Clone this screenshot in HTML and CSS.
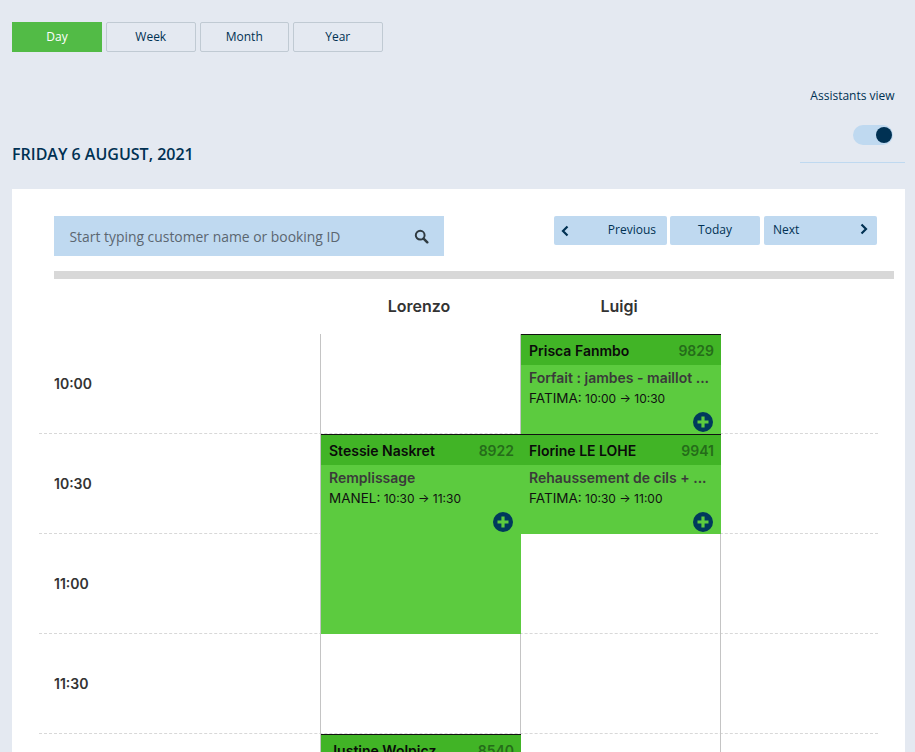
FILE: index.html
```html
<!DOCTYPE html>
<html lang="en">
<head>
<meta charset="utf-8">
<title>Calendar</title>
<link rel="stylesheet" href="styles.css">
</head>
<body>
<header class="top">
  <nav class="tabs">
    <button class="tab tab-active">Day</button>
    <button class="tab">Week</button>
    <button class="tab">Month</button>
    <button class="tab">Year</button>
  </nav>
  <div class="headline">
    <h1 class="date">FRIDAY 6 AUGUST, 2021</h1>
    <div class="assist">
      <span class="assist-label">Assistants view</span>
      <span class="toggle"><span class="knob"></span></span>
    </div>
  </div>
</header>
<main class="card">
  <div class="tools">
    <div class="search">
      <span class="search-text">Start typing customer name or booking ID</span>
      <svg class="search-icon" viewBox="0 0 16 16" width="15" height="15"><circle cx="6.6" cy="6.6" r="4.7" fill="none" stroke="#2f3a40" stroke-width="2.1"/><path d="M10.2 10.2l4 4" fill="none" stroke="#2f3a40" stroke-width="2.6" stroke-linecap="round"/></svg>
    </div>
    <div class="pager">
      <button class="page page-prev"><svg viewBox="0 0 10 12" width="10" height="12"><path d="M7.5 1.5L3 6l4.5 4.5" fill="none" stroke="#003153" stroke-width="2.2"/></svg><span>Previous</span></button>
      <button class="page page-today">Today</button>
      <button class="page page-next"><span>Next</span><svg viewBox="0 0 10 12" width="10" height="12"><path d="M2.5 1.5L7 6l-4.5 4.5" fill="none" stroke="#003153" stroke-width="2.2"/></svg></button>
    </div>
  </div>
  <div class="rule"></div>
  <div class="names">
    <span class="name">Lorenzo</span>
    <span class="name">Luigi</span>
  </div>
  <div class="grid">
    <div class="line line-1"></div>
    <div class="line line-2"></div>
    <div class="line line-3"></div>
    <div class="line line-4"></div>
    <div class="vline vline-a"></div>
    <div class="vline vline-b"></div>
    <div class="vline vline-c"></div>
    <div class="time time-1">10:00</div>
    <div class="time time-2">10:30</div>
    <div class="time time-3">11:00</div>
    <div class="time time-4">11:30</div>

    <article class="event ev-prisca">
      <div class="ev-head"><span class="ev-name">Prisca Fanmbo</span><span class="ev-id">9829</span></div>
      <div class="ev-body">
        <div class="ev-title">Forfait : jambes - maillot ...</div>
        <div class="ev-meta"><span class="ev-who">FATIMA:</span> 10:00 → 10:30</div>
      </div>
      <svg class="plus" viewBox="0 0 20 20" width="20" height="20"><circle cx="10" cy="10" r="10" fill="#00395c"/><path d="M10 4.5v11M4.5 10h11" stroke="#5ccb3f" stroke-width="3.2"/></svg>
    </article>
    <article class="event ev-stessie">
      <div class="ev-head"><span class="ev-name">Stessie Naskret</span><span class="ev-id">8922</span></div>
      <div class="ev-body">
        <div class="ev-title">Remplissage</div>
        <div class="ev-meta"><span class="ev-who">MANEL:</span> 10:30 → 11:30</div>
      </div>
      <svg class="plus" viewBox="0 0 20 20" width="20" height="20"><circle cx="10" cy="10" r="10" fill="#00395c"/><path d="M10 4.5v11M4.5 10h11" stroke="#5ccb3f" stroke-width="3.2"/></svg>
    </article>
    <article class="event ev-florine">
      <div class="ev-head"><span class="ev-name">Florine LE LOHE</span><span class="ev-id">9941</span></div>
      <div class="ev-body">
        <div class="ev-title">Rehaussement de cils + ...</div>
        <div class="ev-meta"><span class="ev-who">FATIMA:</span> 10:30 → 11:00</div>
      </div>
      <svg class="plus" viewBox="0 0 20 20" width="20" height="20"><circle cx="10" cy="10" r="10" fill="#00395c"/><path d="M10 4.5v11M4.5 10h11" stroke="#5ccb3f" stroke-width="3.2"/></svg>
    </article>
    <article class="event ev-justine">
      <div class="ev-head"><span class="ev-name">Justine Wolpicz</span><span class="ev-id">8540</span></div>
    </article>
  </div>
</main>
</body>
</html>
```
FILE: styles.css
```css
* { box-sizing: border-box; }
html, body { margin: 0; height: 752px; overflow: hidden; }
body { background: #e4e9f1; font-family: "Open Sans", "Noto Sans", sans-serif; color: #003153; }
button { font-family: inherit; cursor: pointer; }

.top { padding: 22px 10px 0 12px; height: 189px; }
.tabs { display: flex; gap: 4px; }
.tab { width: 89.5px; height: 30px; padding: 0 0 1px; font-size: 12px; color: #003153; background: transparent; border: 1px solid #c0cad3; border-radius: 2px; }
.tab-active { width: 90px; background: #52bb46; border-color: #52bb46; color: #fff; border-radius: 0; }

.headline { display: flex; justify-content: space-between; align-items: flex-start; margin-top: 34px; }
.date { margin: 58px 0 0; font-size: 16px; font-weight: 600; line-height: 20px; }
.assist { width: 105px; height: 77px; padding-top: 2px; display: flex; flex-direction: column; align-items: center; border-bottom: 1px solid #bfd9f0; }
.assist-label { font-size: 12px; line-height: 16px; white-space: nowrap; }
.toggle { align-self: flex-end; width: 40px; height: 20px; margin: 21px 12px 0 0; padding: 2px 1px 2px 2px; background: #bfd9f0; border-radius: 10px; display: flex; justify-content: flex-end; }
.knob { width: 16px; height: 16px; border-radius: 50%; background: #003153; }

.card { margin: 0 10px 0 12px; height: 563px; background: #fff; padding: 27px 11px 0 27px; overflow: hidden; }
.tools { display: flex; justify-content: space-between; align-items: flex-start; padding: 0 17px 0 15px; height: 55px; }
.search { width: 390px; height: 40px; background: #bfd9f0; display: flex; align-items: center; justify-content: space-between; padding: 0 15.5px 0 15.5px; }
.search-text { font-size: 13.9px; color: #5b6670; }
.search-icon { flex: none; }
.pager { display: flex; gap: 3px; }
.page { height: 29px; padding: 0 6px 2px; border: 0; border-radius: 2px; background: #bfd9f0; color: #003153; font-size: 12px; display: flex; align-items: center; justify-content: space-between; }
.page-prev { width: 113px; padding-right: 11px; }
.page-prev svg { margin-top: 3px; }
.page-next { width: 113px; padding: 0 9px 2px; margin-left: 1px; }
.page-next svg { margin: -1px -1px 0 0; }
.page-today { width: 90px; justify-content: center; }
.rule { height: 8px; margin-left: 15px; background: #d8d8d8; }
.names { display: grid; grid-template-columns: 280px 200px 200px; height: 55px; font-family: "Inter", sans-serif; }
.name { font-size: 16px; font-weight: 600; color: #333; text-align: center; padding-top: 17px; line-height: 20px; }
.name:first-child { grid-column: 2; }

.grid { display: grid; grid-template-columns: 281px 1px 200px 200px 157px; grid-auto-rows: 100px; font-family: "Inter", sans-serif; width: 839px; }
.line { grid-column: 1 / -1; border-bottom: 1px dashed #d8d8d8; }
.line-1 { grid-row: 1; } .line-2 { grid-row: 2; } .line-3 { grid-row: 3; } .line-4 { grid-row: 4; }
.vline { grid-row: 1 / 6; width: 1px; background: #c4c4c4; }
.vline-a { grid-column: 2; }
.vline-b { grid-column: 3; justify-self: end; }
.vline-c { grid-column: 4; justify-self: end; }
.time { grid-column: 1; align-self: center; padding: 0 0 2px 15px; font-size: 14px; font-weight: 600; color: #333; }
.time-1 { grid-row: 1; } .time-2 { grid-row: 2; } .time-3 { grid-row: 3; } .time-4 { grid-row: 4; }

.event { position: relative; background: #5ccb3f; color: #111; border-top: 1px solid #111; z-index: 1; overflow: hidden; }
.ev-prisca { grid-column: 4; grid-row: 1; }
.ev-florine { grid-column: 4; grid-row: 2; }
.ev-stessie { grid-column: 3; grid-row: 2 / 4; }
.ev-justine { grid-column: 3; grid-row: 5; }
.ev-head { height: 30px; background: #41b426; display: flex; justify-content: space-between; align-items: center; padding: 0 7px 0 8px; }
.ev-name { font-size: 14px; font-weight: 600; color: #0a0a0a; }
.ev-id { font-size: 14px; font-weight: 600; color: #256c1a; }
.ev-body { padding: 3px 8px 0; }
.ev-title { font-size: 14px; font-weight: 600; color: #3a3a3a; line-height: 20px; white-space: nowrap; }
.ev-meta { font-size: 12px; line-height: 20px; color: #111; white-space: nowrap; }
.ev-who { font-size: 13.5px; }
.plus { position: absolute; right: 8px; top: 77px; }
```
